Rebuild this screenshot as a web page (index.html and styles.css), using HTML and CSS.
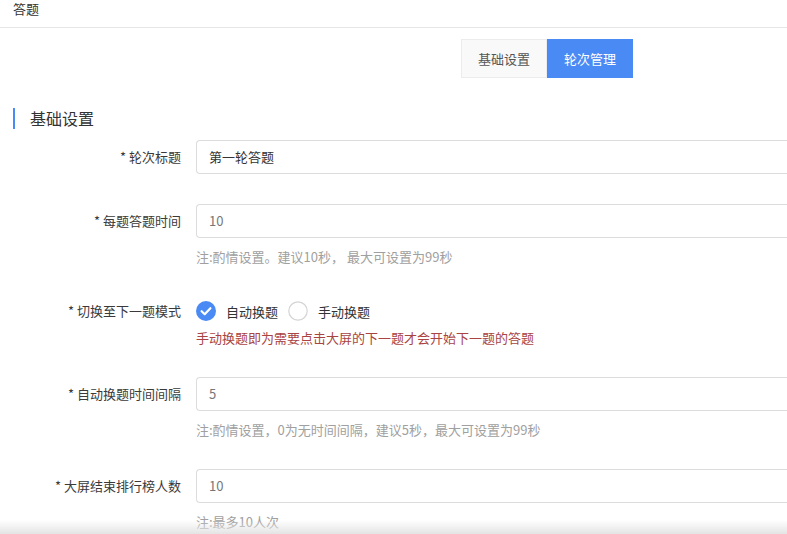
FILE: index.html
```html
<!DOCTYPE html>
<html lang="zh">
<head>
<meta charset="utf-8">
<title>答题</title>
<link rel="stylesheet" href="styles.css">
</head>
<body>
<div class="header">答题</div>
<div class="tabs">
  <div class="tab">基础设置</div>
  <div class="tab active">轮次管理</div>
</div>
<div class="section-title">基础设置</div>
<form class="form">
  <div class="item">
    <label class="label">* 轮次标题</label>
    <div class="field"><div class="input dark">第一轮答题</div></div>
  </div>
  <div class="item">
    <label class="label">* 每题答题时间</label>
    <div class="field">
      <div class="input">10</div>
      <div class="hint">注:酌情设置。建议10秒， 最大可设置为99秒</div>
    </div>
  </div>
  <div class="item">
    <label class="label radio-label">* 切换至下一题模式</label>
    <div class="field">
      <div class="radios">
        <span class="radio checked"><svg width="20" height="20" viewBox="0 0 20 20"><circle cx="10" cy="10" r="10" fill="#4a8af4"/><path d="M5.6 10.2 L8.7 13.2 L14.4 7.2" fill="none" stroke="#fff" stroke-width="2.2" stroke-linecap="round" stroke-linejoin="round"/></svg></span>
        <span class="radio-text">自动换题</span>
        <span class="radio"><svg width="20" height="20" viewBox="0 0 20 20"><circle cx="10" cy="10" r="9.2" fill="#fff" stroke="#d4d4d4" stroke-width="1.2"/></svg></span>
        <span class="radio-text">手动换题</span>
      </div>
      <div class="warn">手动换题即为需要点击大屏的下一题才会开始下一题的答题</div>
    </div>
  </div>
  <div class="item">
    <label class="label">* 自动换题时间间隔</label>
    <div class="field">
      <div class="input">5</div>
      <div class="hint">注:酌情设置，0为无时间间隔，建议5秒，最大可设置为99秒</div>
    </div>
  </div>
  <div class="item">
    <label class="label">* 大屏结束排行榜人数</label>
    <div class="field">
      <div class="input">10</div>
      <div class="hint">注:最多10人次</div>
    </div>
  </div>
</form>
<div class="bottom-shade"></div>
</body>
</html>
```
FILE: styles.css
```css
html, body {
  margin: 0;
  padding: 0;
  background: #fff;
  overflow: hidden;
}
body {
  font-family: "Noto Sans CJK SC", "Liberation Sans", sans-serif;
  font-size: 13px;
  color: #333;
  width: 787px;
  height: 534px;
}
.header {
  height: 28px;
  line-height: 18px;
  padding-left: 13px;
  font-size: 13px;
  color: #333;
  border-bottom: 1px solid #e6e6e6;
  box-sizing: border-box;
}
.tabs {
  display: flex;
  margin-top: 11px;
  padding-left: 461px;
}
.tab {
  width: 86px;
  height: 39px;
  box-sizing: border-box;
  display: flex;
  align-items: center;
  justify-content: center;
  font-size: 13px;
  color: #555;
  background: #f9f9f9;
  border: 1px solid #ececec;
}
.tab.active {
  background: #4a8af4;
  border-color: #4a8af4;
  color: #fff;
}
.section-title {
  margin: 30px 0 0 13px;
  height: 21px;
  line-height: 21px;
  border-left: 2px solid #4a8af4;
  padding-left: 15px;
  font-size: 16px;
  color: #333;
}
.form {
  margin-top: 11px;
}
.item {
  display: flex;
  align-items: flex-start;
  margin-bottom: 30px;
}
.item:has(.hint), .item:has(.warn) {
  margin-bottom: 29px;
}
.label {
  width: 181px;
  flex: none;
  text-align: right;
  line-height: 34px;
  font-size: 13px;
  color: #3a3a3a;
  padding-right: 15px;
  box-sizing: content-box;
}
.radio-label {
  line-height: 30px;
}
.field {
  flex: 1;
  min-width: 0;
}
.input {
  height: 34px;
  box-sizing: border-box;
  border: 1px solid #dcdcdc;
  border-right: none;
  border-radius: 4px 0 0 4px;
  padding-left: 12px;
  line-height: 32px;
  font-size: 13px;
  color: #777;
  margin-right: -10px;
}
.input.dark {
  color: #333;
}
.hint {
  margin-top: 9px;
  line-height: 20px;
  font-size: 13px;
  color: #a0a0a0;
}
.radios {
  display: flex;
  align-items: center;
  height: 30px;
}
.radio {
  width: 20px;
  height: 20px;
  display: flex;
}
.radio-text {
  margin: 0 10px 0 10px;
  font-size: 13px;
  color: #333;
}
.warn {
  margin-top: 2px;
  line-height: 20px;
  font-size: 13px;
  color: #a94442;
}
.bottom-shade {
  position: fixed;
  left: 0;
  right: 0;
  bottom: 0;
  height: 14px;
  background: linear-gradient(to bottom, rgba(230,230,230,0), #e4e4e4);
}
```
